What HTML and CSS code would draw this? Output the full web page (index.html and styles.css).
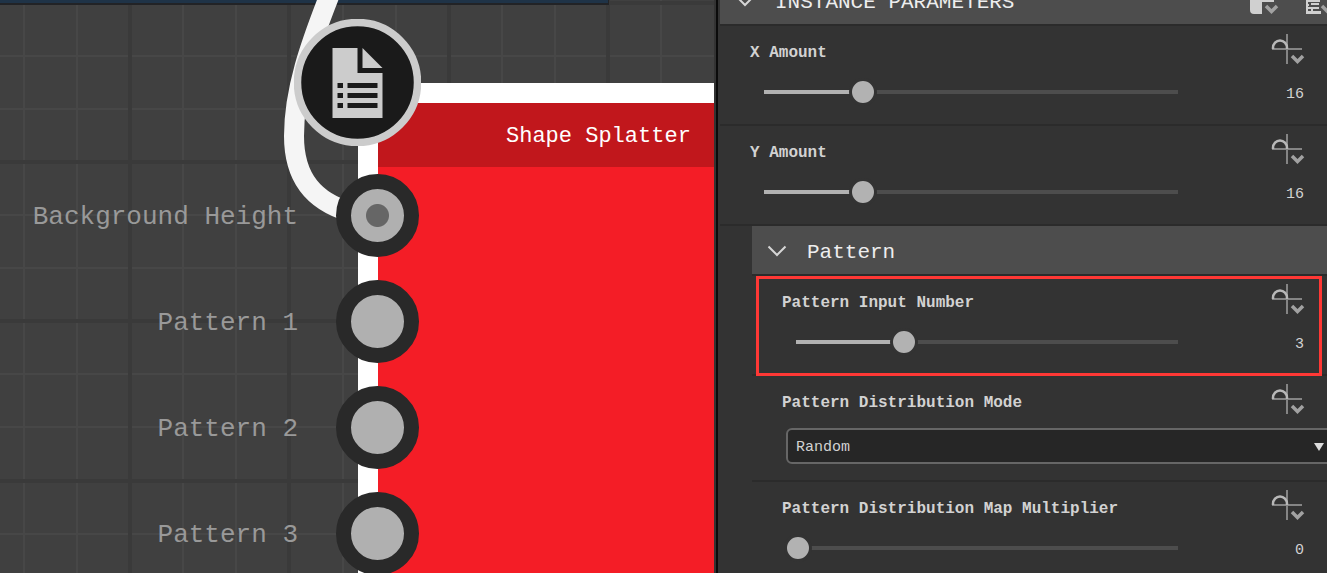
FILE: index.html
```
<!DOCTYPE html>
<html lang="en">
<head>
<meta charset="utf-8">
<title>Shape Splatter</title>
<link rel="stylesheet" href="styles.css">
</head>
<body>
<svg class="defs" aria-hidden="true">
  <symbol id="fn" viewBox="0 0 34 30">
    <path d="M1 15H31M16 0V30" stroke="#858585" stroke-width="2" fill="none"/>
    <path d="M2 15V14A7 7.500 0 0 1 16 14V15" stroke="#b8b8b8" stroke-width="2.500" fill="none"/>
    <path d="M21 22L26.500 27.500L32 22" stroke="#a2a2a2" stroke-width="3.500" fill="none"/>
  </symbol>
  <symbol id="chev" viewBox="0 0 20 12">
    <path d="M1.500 1.500L10 10L18.500 1.500" stroke="#d6d6d6" stroke-width="2" fill="none"/>
  </symbol>
</svg>
<div class="app">
  <main class="canvas">
    <svg class="scene" aria-hidden="true">
      <path class="minor" d="M24 0V2000M77 0V2000M183 0V2000M236 0V2000M343 0V2000M396 0V2000M502 0V2000M555 0V2000M661 0V2000M0 56H2000M0 109H2000M0 215H2000M0 268H2000M0 374H2000M0 427H2000M0 534H2000"/>
      <path class="major" d="M130 0V2000M289 0V2000M449 0V2000M608 0V2000M0 3H2000M0 162H2000M0 321H2000M0 481H2000"/>
      <path class="frame" d="M0 0H609V5H0Z"/>
      <path class="frame-fill" d="M0 0H608V3H0Z"/>
      <path class="wire" d="M330 -6C310 45 294 90 294 136C294 180 316 202 350 212"/>
    </svg>
    <section class="node">
      <h1 class="node-title">Shape Splatter</h1>
    </section>
    <svg class="badge" viewBox="0 0 127 127" aria-hidden="true">
      <circle cx="63.500" cy="63.500" r="60" fill="#1a1a1a" stroke="#ccc" stroke-width="7.500"/>
      <path fill="#ccc" d="M38.500 29H63.500V54H88.500V99H38.500ZM68.500 29L88.500 49H68.500Z"/>
      <path fill="#1a1a1a" d="M43.500 64H49V69H43.500ZM53.500 64H83.500V69H53.500ZM43.500 74H49V79H43.500ZM53.500 74H83.500V79H53.500ZM43.500 84H49V89H43.500ZM53.500 84H83.500V89H53.500Z"/>
    </svg>
    <ul class="ports">
      <li class="port"><span>Background Height</span><i class="dot linked"></i></li>
      <li class="port"><span>Pattern 1</span><i class="dot"></i></li>
      <li class="port"><span>Pattern 2</span><i class="dot"></i></li>
      <li class="port"><span>Pattern 3</span><i class="dot"></i></li>
    </ul>
  </main>
  <div class="splitter"></div>
  <aside class="panel">
    <header class="head">
      <svg class="chev"><use href="#chev"/></svg>
      <h2>INSTANCE PARAMETERS</h2>
      <svg class="tools" viewBox="0 0 77 24" aria-hidden="true">
        <path fill="#d0d0d0" d="M0 0H24V2H12V14H4Q0 14 0 10Z"/>
        <path d="M16 6L21.500 11.500L27 6" stroke="#a2a2a2" stroke-width="3.500" fill="none"/>
        <path fill="#d0d0d0" d="M56 0H58V14H56ZM58 0H70V2H58ZM58 4H59V6H58ZM61 3H69V5H61ZM58 7H69V9H58ZM61 7H63V13H61ZM58 11H71V14H58Z"/>
        <path d="M72 6L77.500 11.500L83 6" stroke="#a2a2a2" stroke-width="3.500" fill="none"/>
      </svg>
    </header>
    <div class="row">
      <div class="line"><label for="x">X Amount</label><button class="fn" aria-label="Function"><svg><use href="#fn"/></svg></button></div>
      <div class="control"><input id="x" type="range" min="1" max="65" value="16" style="--p:.234"><output>16</output></div>
    </div>
    <div class="row">
      <div class="line"><label for="y">Y Amount</label><button class="fn" aria-label="Function"><svg><use href="#fn"/></svg></button></div>
      <div class="control"><input id="y" type="range" min="1" max="65" value="16" style="--p:.234"><output>16</output></div>
    </div>
    <div class="group">
      <header class="head">
        <svg class="chev"><use href="#chev"/></svg>
        <h2>Pattern</h2>
      </header>
      <div class="row marked">
        <div class="line"><label for="n">Pattern Input Number</label><button class="fn" aria-label="Function"><svg><use href="#fn"/></svg></button></div>
        <div class="control"><input id="n" type="range" min="1" max="8.2" value="3" style="--p:.278"><output>3</output></div>
      </div>
      <div class="row choice">
        <div class="line"><label for="m">Pattern Distribution Mode</label><button class="fn" aria-label="Function"><svg><use href="#fn"/></svg></button></div>
        <div class="drop"><select id="m"><option>Random</option></select></div>
      </div>
      <div class="row">
        <div class="line"><label for="k">Pattern Distribution Map Multiplier</label><button class="fn" aria-label="Function"><svg><use href="#fn"/></svg></button></div>
        <div class="control"><input id="k" type="range" min="0" max="10" value="0" style="--p:0"><output>0</output></div>
      </div>
    </div>
  </aside>
</div>
</body>
</html>
```
FILE: styles.css
```
* { box-sizing: border-box; }
body {
  margin: 0;
  background: #333;
  font-family: "Liberation Mono", monospace;
  overflow: hidden;
}
h1, h2, ul { margin: 0; padding: 0; font-weight: 400; list-style: none; }
.defs { display: none; }
.app {
  display: grid;
  grid-template-columns: 714fr 6px 607fr;
  height: 100vh;
  overflow: hidden;
}

/* Graph canvas */
.canvas { position: relative; overflow: hidden; background: #404040; }
.scene { position: absolute; inset: 0; width: 100%; height: 100%; }
.minor { stroke: #474747; stroke-width: 2; }
.major { stroke: #3a3a3a; stroke-width: 4; }
.frame { fill: #222326; }
.frame-fill { fill: #1f3347; }
.wire { fill: none; stroke: #f5f5f5; stroke-width: 20; }
.node {
  position: absolute;
  left: 358px;
  top: 83px;
  right: -80px;
  bottom: -80px;
  border: 20px solid #fff;
  background: #f41d26;
}
.node-title {
  padding: 4px 0 0 128px;
  background: #c1171c;
  color: #fff;
  font-size: 22px;
  line-height: 60px;
}
.badge { position: absolute; left: 294px; top: 19px; width: 127px; height: 127px; }
.ports {
  position: absolute;
  left: 0;
  top: 174px;
  width: 419px;
  display: flex;
  flex-direction: column;
  gap: 23px;
}
.port {
  display: flex;
  align-items: center;
  justify-content: flex-end;
  gap: 38px;
  color: #999;
  font-size: 26px;
}
.port span { padding-top: 2px; }
.dot {
  width: 83px;
  height: 83px;
  border: 15px solid #292929;
  border-radius: 50%;
  background: #b0b0b0;
}
.linked { background: radial-gradient(circle, #666 11px, #b0b0b0 12px); }

.splitter {
  border: solid #333;
  border-width: 0 2px;
  background: #0b0b0b;
}

/* Parameter panel */
.panel { margin-top: -24px; background: #333; color: #d2d2d2; min-width: 0; }
.head {
  display: flex;
  align-items: center;
  gap: 20px;
  height: 50px;
  padding-left: 15px;
  background: #4d4d4d;
  border-bottom: 2px solid #2b2b2b;
  color: #eee;
}
.head h2 { font-size: 21px; line-height: 42px; padding-top: 6px; }
.chev { width: 20px; height: 12px; margin-top: 2px; }
.tools { width: 77px; height: 24px; margin-left: auto; align-self: flex-end; }
.group { margin-left: 32px; }
.row {
  position: relative;
  padding: 8px 22px 18px 30px;
  border-bottom: 2px solid #2b2b2b;
}
.line {
  display: flex;
  justify-content: space-between;
  height: 36px;
  margin-bottom: 8px;
  font-size: 16px;
  font-weight: 700;
  line-height: 38px;
}
.fn { width: 34px; height: 30px; padding: 0; border: 0; background: none; }
.fn svg { display: block; width: 34px; height: 30px; }
.control {
  display: flex;
  align-items: center;
  justify-content: space-between;
  height: 28px;
  padding: 0 1px 0 2px;
  font-size: 15px;
}
.control input {
  appearance: none;
  flex: 1;
  min-width: 0;
  height: 28px;
  margin: 0 80px 0 0;
  --at: calc(14px + (100% - 28px) * var(--p));
  background: linear-gradient(90deg, transparent 12px, #b2b2b2 12px, #b2b2b2 var(--at), #4d4d4d var(--at), #4d4d4d calc(100% - 14px), transparent calc(100% - 14px)) center / 100% 4px no-repeat;
}
.control input::-webkit-slider-thumb {
  appearance: none;
  width: 28px;
  height: 28px;
  border: 3px solid #333;
  border-radius: 50%;
  background: #b2b2b2;
}
.control output { width: 32px; text-align: right; padding-top: 4px; }
.marked::after {
  content: "";
  position: absolute;
  inset: 0 5px -2px 4px;
  border: 3px solid #ff3835;
  pointer-events: none;
}
.choice { padding-bottom: 16px; }
.drop { position: relative; margin: 0 -30px 0 4px; }
.drop select {
  display: block;
  appearance: none;
  width: 100%;
  height: 36px;
  padding: 2px 8px 0;
  border: 2px solid #666;
  border-radius: 6px;
  background: #262626;
  color: #d2d2d2;
  font: 15px "Liberation Mono", monospace;
}
.drop::after {
  content: "";
  position: absolute;
  right: 11px;
  top: 15px;
  border: 5px solid transparent;
  border-top: 8px solid #ddd;
  border-bottom: 0;
  pointer-events: none;
}
```
